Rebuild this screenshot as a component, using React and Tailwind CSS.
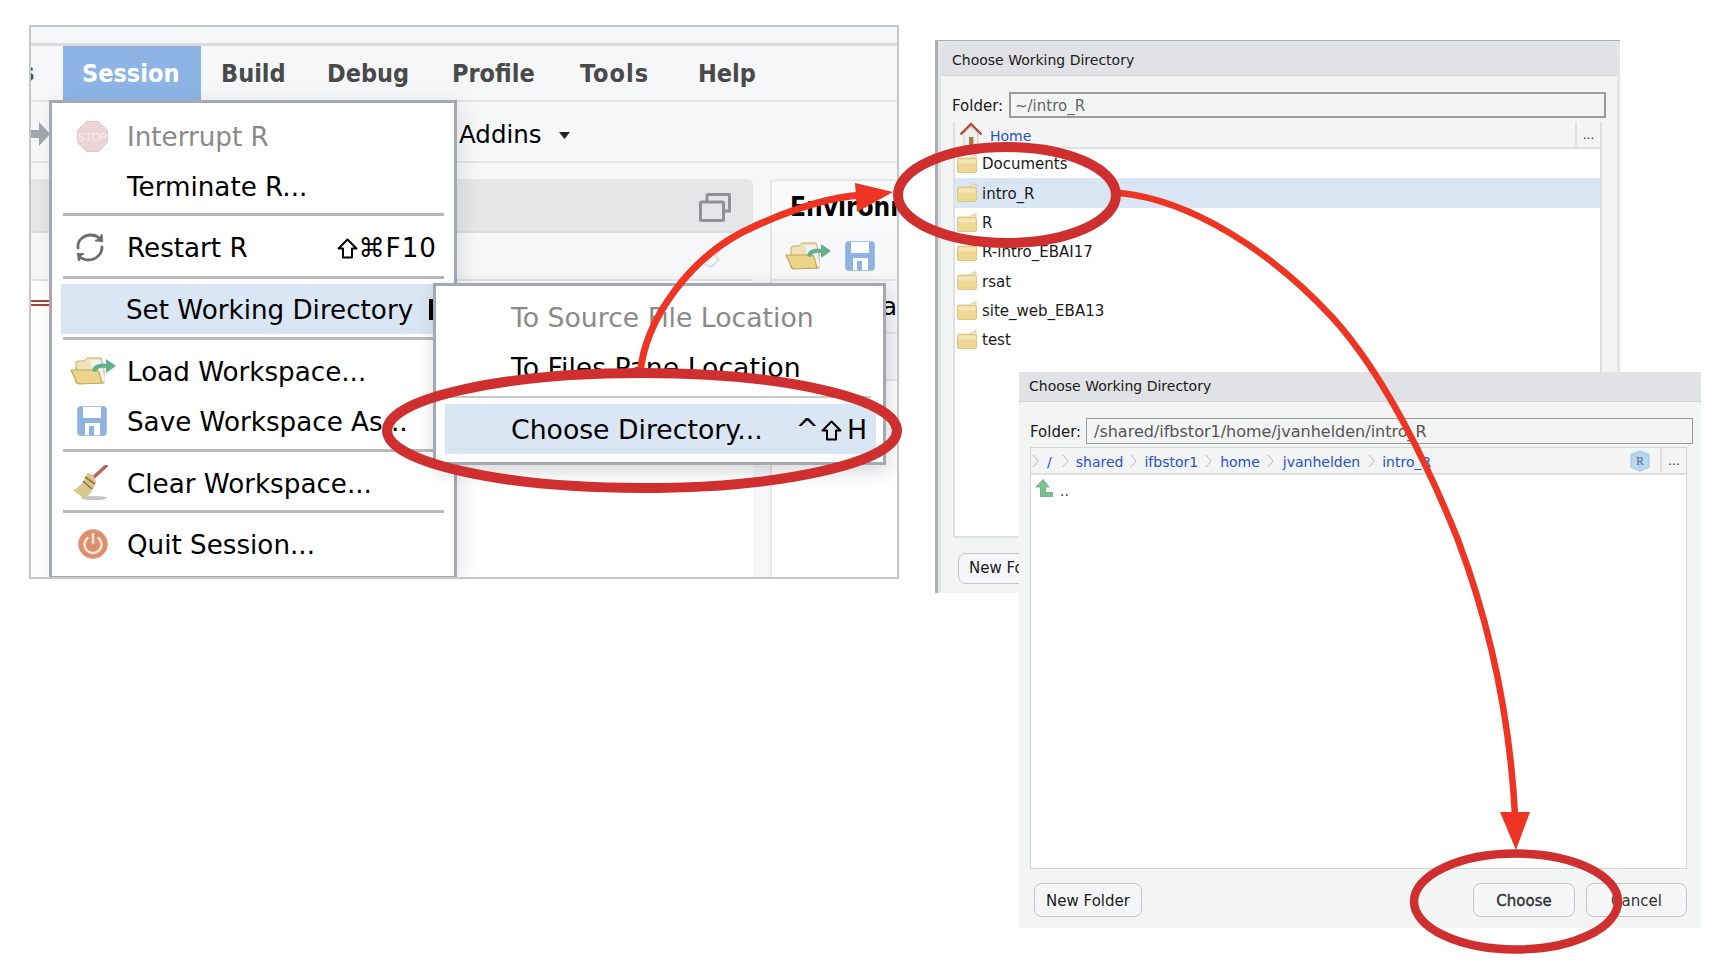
import React from "react";

const Stop = () => (
  <svg width="31" height="31" viewBox="0 0 31 31">
    <polygon points="9.5,0.5 21.5,0.5 30.5,9.5 30.5,21.5 21.5,30.5 9.5,30.5 0.5,21.5 0.5,9.5" fill="#ecd3d5" stroke="#e6c8ca" />
    <text x="15.5" y="20" textAnchor="middle" fontSize="11" fill="#f6eced" fontFamily="Liberation Sans, sans-serif">STOP</text>
  </svg>
);
const Refresh = () => (
  <svg width="29" height="31" viewBox="0 0 29 31" fill="none" stroke="#6e6e6e" strokeWidth="2.8" strokeLinecap="round">
    <path d="M3 16 C2 8 9 3 16 3 C20 3 22 4 24 6" />
    <path d="M27 15 C27 23 20 28 13 28 C10 28 8 27 6 26" />
    <path d="M21 8.5 L27 9 L26.5 3" strokeWidth="2.2" fill="#6e6e6e" />
    <path d="M8 22 L3 22 L4 28" strokeWidth="2.2" fill="#6e6e6e" />
  </svg>
);
const FolderOpen = () => (
  <svg width="46" height="28" viewBox="0 0 46 28">
    <path d="M6 11 L6 6 Q6 4 8 4 L14 4 L17 1 L31 1 L34 12 L34 26 L6 26 Z" fill="#efe2b8" stroke="#c6ae6a" strokeWidth="1" />
    <path d="M20 3 L31 3 L35 24 L24 24 Z" fill="#f1f2f2" />
    <path d="M1 13 L27 13 Q28 13 29 15 L32 26 L9 27 Q8 27 7 26 Z" fill="#ecd488" stroke="#c2a85f" strokeWidth="1.2" />
    <path d="M22 14 C23 8 28 6 36 7 L36 2 L46 9 L36 16 L36 11 C31 10 27 11 26 15 Z" fill="#62b08c" />
  </svg>
);
const Floppy = ({ s = 30 }) => (
  <svg width={s} height={s} viewBox="0 0 30 30">
    <rect x="0.5" y="0.5" width="29" height="29" rx="3" fill="#8fb3e0" stroke="#a9c3e6" />
    <rect x="6" y="1" width="18" height="11" fill="#fff" />
    <path d="M8 29 L8 17 L23 17 L23 29 Z" fill="#fff" />
    <rect x="12" y="20" width="5" height="9" fill="#8fb3e0" />
  </svg>
);
const Broom = () => (
  <svg width="36" height="36" viewBox="0 0 36 36">
    <ellipse cx="22" cy="33" rx="13" ry="2" fill="#c4c4c4" />
    <path d="M22 12 L34 1" stroke="#b0685a" strokeWidth="3.5" strokeLinecap="round" />
    <path d="M15 8 C20 8 24 13 24 17 C22 24 16 32 13 34 C8 31 4 27 1 25 C7 23 12 17 15 8 Z" fill="#d9c78f" />
    <path d="M13 12 L23 19 M11 16 L20 24" stroke="#8d7441" strokeWidth="1.6" />
  </svg>
);
const Power = () => (
  <svg width="30" height="30" viewBox="0 0 30 30" fill="none">
    <circle cx="15" cy="15" r="14.5" fill="#dc8f6b" stroke="#e2a88e" />
    <path d="M9.5 9 A8.5 8.5 0 1 0 20.5 9" stroke="#f6e2d6" strokeWidth="2.6" strokeLinecap="round" />
    <path d="M15 5 L15 14" stroke="#f6e2d6" strokeWidth="2.6" strokeLinecap="round" />
  </svg>
);
const Restore = () => (
  <svg width="32" height="29" viewBox="0 0 32 29" fill="none" stroke="#8f9195" strokeWidth="3">
    <path d="M8 9 L8 2 Q8 1.5 9 1.5 L30 1.5 Q30.5 1.5 30.5 2 L30.5 18 L24 18" />
    <rect x="1.5" y="9" width="23" height="18.5" rx="1" />
  </svg>
);
const Folder = () => (
  <svg width="20" height="19" viewBox="0 0 20 19" className="shrink-0">
    <path d="M1 4 L12 4 L19 0.5 L19 5 L1 6 Z" fill="#f0e6c4" stroke="#d6c68c" strokeWidth="0.8" />
    <rect x="0.5" y="4.5" width="19" height="14" rx="1.5" fill="#eed693" stroke="#dcc685" />
    <rect x="1.5" y="5.5" width="17" height="4" fill="#f5e6b6" />
  </svg>
);
const Home = () => (
  <svg width="24" height="26" viewBox="0 0 24 26">
    <path d="M5 11 L5 24 L19 24 L19 11 L12 5 Z" fill="#efefec" stroke="#c9c9c4" />
    <rect x="10" y="15" width="4.5" height="9" fill="#a87a4a" />
    <path d="M1.5 12.5 L12 2 L22.5 12.5" fill="none" stroke="#b04a3e" strokeWidth="2.4" />
  </svg>
);
const RCube = () => (
  <svg width="20" height="22" viewBox="0 0 20 22">
    <path d="M10 1 L19 4.5 L19 17.5 L10 21 L1 17.5 L1 4.5 Z" fill="#bcd8ee" stroke="#a3c5e2" />
    <path d="M1 4.5 L10 8 L19 4.5 M10 8 L10 21" fill="none" stroke="#a3c5e2" strokeWidth="0.8" />
    <text x="10" y="15" textAnchor="middle" fontSize="12" fill="#4e6e96" fontFamily="Liberation Serif, serif">R</text>
  </svg>
);
const UpArrow = () => (
  <svg width="18" height="18" viewBox="0 0 18 18">
    <path d="M1 8 L8 0.5 L14 8 L10.5 8 L10.5 13.5 L17.5 13.5 L17.5 17.5 L5.5 17.5 L5.5 8 Z" fill="#7bc08f" stroke="#5fa878" strokeWidth="0.8" />
  </svg>
);
const Chevron = ({ cls }) => (
  <svg width="7" height="14" viewBox="0 0 7 14" fill="none" stroke="#b9bcc0" className={cls}>
    <path d="M1 1 L6 7 L1 13" />
  </svg>
);
const ShiftKey = () => (
  <svg width="21" height="21" viewBox="0 0 21 21" fill="none" stroke="#000" strokeWidth="2" aria-label="shift" className="shrink-0">
    <path d="M10.5 1.5 L19.5 10.5 L15 10.5 L15 19.5 L6 19.5 L6 10.5 L1.5 10.5 Z" strokeLinejoin="round" />
  </svg>
);

const Sep = ({ cls }) => <div className={"h-[3px] ml-[11px] mr-[10px] bg-[#b9b9b9] " + cls} />;

const Row = ({ icon, label, shortcut, cls = "" }) => (
  <div className={"flex items-center h-[50px] " + cls}>
    <div className="w-[75px] pl-[25px] flex items-center">{icon}</div>
    <span className="flex-1 whitespace-nowrap pt-[3px]">{label}</span>
    {shortcut && <span className="pr-[17px] pt-[3px] whitespace-nowrap flex items-center">{shortcut}</span>}
  </div>
);

const MenuItem = ({ label, w, cls = "" }) => (
  <div className={"h-full flex items-center " + w + " " + cls}>{label}</div>
);

const SessionMenu = () => (
  <div className="absolute left-[18px] top-[73px] w-[408px] h-[479px] bg-white border-[3px] border-[#a4a8b3] pt-[8px] text-[26.2px] text-black shadow-[4px_4px_20px_rgba(0,0,0,0.1)]">
    <Row icon={<Stop />} label="Interrupt R" cls="text-[#8a8a8a]" />
    <Row label="Terminate R..." />
    <Sep cls="mt-[2px] mb-[6px]" />
    <Row icon={<span className="-ml-[2px]"><Refresh /></span>} label="Restart R" shortcut={<><ShiftKey /><span className="tracking-[1px]">⌘F10</span></>} />
    <Sep cls="mt-[4px] mb-[5px]" />
    <div className="flex items-center h-[50px] bg-[#dbe6f5] ml-[9px] overflow-hidden">
      <span className="pl-[65px] pt-[3px] whitespace-nowrap">Set Working Directory</span>
      <span className="ml-[16px] w-[8px] h-[21px] bg-black shrink-0" />
    </div>
    <Sep cls="mt-[3px] mb-[6px]" />
    <Row icon={<span className="-ml-[7px]"><FolderOpen /></span>} label="Load Workspace..." />
    <Row icon={<Floppy />} label="Save Workspace As..." />
    <Sep cls="mt-[3px] mb-[6px]" />
    <Row icon={<span className="-ml-[5px]"><Broom /></span>} label="Clear Workspace..." />
    <Sep cls="mt-[2px] mb-[6px]" />
    <Row icon={<span className="ml-[1px]"><Power /></span>} label="Quit Session..." />
  </div>
);

const SubMenu = () => (
  <div className="absolute left-[402px] top-[256px] w-[453px] h-[182px] bg-white border-[3px] border-[#a4a8b3] pt-[7px] text-[26.7px] text-black shadow-[2px_6px_18px_rgba(0,0,0,0.16)]">
    <div className="h-[50px] flex items-center pl-[75px] pt-[1px] text-[#8a8a8a] whitespace-nowrap">To Source File Location</div>
    <div className="h-[50px] flex items-center pl-[75px] pt-[1px] whitespace-nowrap">To Files Pane Location</div>
    <div className="h-[2px] mt-[3px] mb-[6px] ml-[9px] mr-[12px] bg-[#c8c8c8]" />
    <div className="h-[50px] ml-[9px] mr-[7px] bg-[#dbe6f5] flex items-center justify-between pl-[66px] pr-[9px] pt-[2px]">
      <span className="whitespace-nowrap">Choose Directory...</span>
      <span className="whitespace-nowrap flex items-center gap-[5px]"><span className="text-[28px] -mr-[3px]">^</span><ShiftKey /><span>H</span></span>
    </div>
  </div>
);

const RStudio = () => (
  <div className="absolute left-[29px] top-[25px] w-[870px] h-[554px] border-2 border-[#c6c7ca] bg-[#f6f7f9] flex flex-col overflow-hidden">
    <div className="h-[16px] shrink-0" />
    <div className="h-[3px] shrink-0 bg-[#dadbdd]" />
    <div className="h-[54px] shrink-0 flex items-center text-[25px] font-bold text-[#4a4a4a] font-['DejaVu_Sans_Condensed','DejaVu_Sans',sans-serif]">
      <div className="w-[32px] overflow-hidden"><span className="-ml-[10px] block">s</span></div>
      <MenuItem label="Session" w="w-[138px]" cls="bg-[#8eb4e6] text-white pl-[19px] pt-[2px]" />
      <MenuItem label="Build" w="w-[126px]" cls="pl-[20px] pt-[2px]" />
      <MenuItem label="Debug" w="w-[125px]" cls="pt-[2px]" />
      <MenuItem label="Profile" w="w-[128px]" cls="pt-[2px]" />
      <MenuItem label="Tools" w="w-[118px]" cls="pt-[2px] tracking-[1px]" />
      <MenuItem label="Help" w="w-[100px]" cls="pt-[2px]" />
    </div>
    <div className="h-[2px] shrink-0 bg-[#e3e4e6]" />
    <div className="h-[59px] shrink-0 flex items-center pt-[4px] text-[24.5px] text-black">
      <svg width="19" height="26" viewBox="0 0 19 26" className="shrink-0"><path d="M0 9 L8 9 L8 1 L19 13 L8 25 L8 17 L0 17 Z" fill="#a2a6b0" /></svg>
      <span className="ml-[409px] pt-[3px] whitespace-nowrap">Addins</span>
      <svg width="11" height="7" viewBox="0 0 11 7" className="ml-[17px] mt-[4px]"><path d="M0 0 L11 0 L5.5 7 Z" fill="#222" /></svg>
    </div>
    <div className="h-[2px] shrink-0 bg-[#e3e4e6]" />
    <div className="flex-1 flex mt-[16px] min-h-0">
      <div className="w-[722px] flex flex-col">
        <div className="h-[54px] shrink-0 bg-[#e5e6e8] rounded-tr-[6px] border-b-2 border-[#dcdddf] flex items-center justify-end pr-[22px] pt-[5px]">
          <Restore />
        </div>
        <div className="h-[48px] shrink-0 bg-[#f6f7f9] border-b-2 border-[#e3e4e6] flex items-center justify-end pr-[24px]">
          <svg width="28" height="24" viewBox="0 0 28 24" fill="none" stroke="#dedfe1" strokeWidth="2"><path d="M24 1 L14 12 M3 20 L12 10 L18 16 L10 23 Z" /></svg>
        </div>
        <div className="flex-1 bg-white" />
      </div>
      <div className="w-[17px] shrink-0" />
      <div className="flex-1 flex flex-col overflow-hidden border-l-2 border-[#e5e6e8]">
        <div className="h-[54px] shrink-0 rounded-tl-[6px] border-t-2 border-[#e5e6e8] bg-[#f9fafb] flex items-center pl-[18px] text-[26px] font-bold text-black whitespace-nowrap font-['DejaVu_Sans_Condensed','DejaVu_Sans',sans-serif]">Environment</div>
        <div className="h-[48px] shrink-0 border-b-2 border-[#e3e4e6] flex items-center pl-[13px] gap-[14px]">
          <FolderOpen />
          <Floppy />
        </div>
        <div className="h-[53px] shrink-0 border-b-2 border-[#e3e4e6] flex items-center justify-end text-[25px] text-black overflow-hidden">oa</div>
        <div className="h-[47px] shrink-0 border-b-2 border-[#e3e4e6]" />
        <div className="flex-1 bg-white" />
      </div>
    </div>
    <div className="absolute left-0 top-[273px] w-[18px] flex flex-col gap-[2px]">
      <div className="h-[2px] bg-[#b04038]" />
      <div className="h-[2px] bg-[#b04038]" />
    </div>
    <SessionMenu />
    <SubMenu />
  </div>
);

const FolderRow = ({ name, active }) => (
  <div className={"h-[29.33px] flex items-center pl-[2px] gap-[5px] text-[15px] " + (active ? "bg-[#dbe6f5]" : "")}>
    <Folder />
    <span className="pt-[2px]">{name}</span>
  </div>
);

const DialogBack = () => (
  <div className="absolute left-[935px] top-[40px] w-[685px] h-[553px] bg-[#e4e5e7] border-l-[3px] border-t border-[#aeafb2] pl-[3px] pt-[3px] pr-[3px] text-[14px] text-[#1a1a1a]">
    <div className="h-full bg-[#f3f4f4] rounded-t-[6px] flex flex-col overflow-hidden">
      <div className="h-[32px] shrink-0 bg-[#e1e2e6] border-b border-[#d5d6d8] flex items-center pl-[11px] pt-[2px]">Choose Working Directory</div>
      <div className="flex items-center h-[26px] mt-[16px] ml-[11px] mr-[11px] gap-[2px] text-[15px]">
        <span className="w-[55px] pt-[2px]">Folder:</span>
        <div className="flex-1 h-full border-2 border-[#9a9b9b] flex items-center pl-[4px] pt-[2px] text-[#666]">~/intro_R</div>
      </div>
      <div className="mt-[4px] ml-[12px] mr-[15px] h-[416px] border-2 border-[#dfe1e1] border-t-0 bg-white flex flex-col">
        <div className="h-[27px] shrink-0 bg-[#f3f5f5] border-b-2 border-[#dfe1e1] flex items-center">
          <div className="flex-1 flex items-center pl-[4px] gap-[7px] text-[#2a4fcf]"><Home /><span className="pt-[3px]">Home</span></div>
          <div className="w-[25px] h-full border-l-2 border-[#dfe1e1] flex items-center justify-center text-[#333] text-[12px]">...</div>
        </div>
        <FolderRow name="Documents" />
        <FolderRow name="intro_R" active />
        <FolderRow name="R" />
        <FolderRow name="R-intro_EBAI17" />
        <FolderRow name="rsat" />
        <FolderRow name="site_web_EBA13" />
        <FolderRow name="test" />
      </div>
      <div className="mt-[15px] ml-[17px]">
        <div className="h-[31px] w-[110px] border border-[#c3c5c7] rounded-[8px] bg-[#f5f6f8] flex items-center pl-[10px] text-[15px]">New Folder</div>
      </div>
    </div>
  </div>
);

const Crumb = ({ label, cls }) => <span className={"text-[#2a4fcf] " + cls}>{label}</span>;

const Btn = ({ label, cls }) => (
  <div className={"h-[34px] border border-[#c3c5c7] rounded-[8px] bg-[#f5f6f8] flex items-center justify-center pt-[3px] text-[15px] " + cls}>{label}</div>
);

const DialogFront = () => (
  <div className="absolute left-[1019px] top-[372px] w-[682px] h-[556px] bg-[#f3f4f4] flex flex-col text-[14px] text-[#1a1a1a]">
    <div className="h-[30px] shrink-0 bg-[#e1e2e6] border-b border-[#d5d6d8] flex items-center pl-[10px]">Choose Working Directory</div>
    <div className="flex items-center h-[26px] mt-[16px] ml-[11px] mr-[8px] text-[15px]">
      <span className="w-[56px] pt-[2px]">Folder:</span>
      <div className="flex-1 h-full border border-[#9a9b9b] flex items-center pl-[7px] pt-[2px] text-[#555] text-[16px]">/shared/ifbstor1/home/jvanhelden/intro_R</div>
    </div>
    <div className="mt-[3px] ml-[11px] mr-[14px] flex-1 flex flex-col border border-[#d4d6d6] bg-white">
      <div className="h-[27px] shrink-0 bg-[#f3f5f5] border-b-2 border-[#dfe1e1] flex items-center">
        <div className="flex-1 flex items-center whitespace-nowrap">
          <Chevron cls="ml-[1px]" />
          <Crumb label="/" cls="ml-[8px] pt-[3px]" />
          <Chevron cls="ml-[10px]" />
          <Crumb label="shared" cls="ml-[7px] pt-[3px]" />
          <Chevron cls="ml-[7px]" />
          <Crumb label="ifbstor1" cls="ml-[7px] pt-[3px]" />
          <Chevron cls="ml-[7px]" />
          <Crumb label="home" cls="ml-[8px] pt-[3px]" />
          <Chevron cls="ml-[7px]" />
          <Crumb label="jvanhelden" cls="ml-[9px] pt-[3px]" />
          <Chevron cls="ml-[8px]" />
          <Crumb label="intro_R" cls="ml-[7px] pt-[3px]" />
          <div className="ml-auto mr-[10px]"><RCube /></div>
        </div>
        <div className="w-[26px] h-full border-l-2 border-[#dfe1e1] flex items-center justify-center text-[#333] text-[12px]">...</div>
      </div>
      <div className="flex items-start pl-[4px] pt-[4px] gap-[7px]">
        <UpArrow />
        <span className="leading-[24px] text-[#333]">..</span>
      </div>
    </div>
    <div className="h-[59px] shrink-0 flex items-start pt-[14px] pl-[15px] pr-[14px]">
      <Btn label="New Folder" cls="w-[108px]" />
      <Btn label="Choose" cls="w-[102px] ml-auto text-[#333] [-webkit-text-stroke:0.4px_#333]" />
      <Btn label="Cancel" cls="w-[101px] ml-[11px] text-[#333]" />
    </div>
  </div>
);

const Annotations = () => (
  <svg width="1718" height="962" viewBox="0 0 1718 962" className="absolute left-0 top-0 pointer-events-none" fill="none">
    <path d="M640 374 C645 320 690 255 753 227 C790 210 830 197 862 195" stroke="#ee3524" strokeWidth="7" />
    <polygon points="855,183 893,192 857,212" fill="#ee3524" />
    <path d="M1120 193 C1190 200 1270 250 1332 317 C1385 375 1430 470 1458 540 C1490 625 1510 720 1515 815" stroke="#ee3524" strokeWidth="6.5" />
    <polygon points="1500,812 1530,812 1516,850" fill="#ee3524" />
    <ellipse cx="642" cy="430.5" rx="255" ry="57.5" stroke="#cf2f2f" strokeWidth="10" />
    <ellipse cx="1007" cy="195" rx="109" ry="48" stroke="#cf2f2f" strokeWidth="10" />
    <ellipse cx="1516" cy="901.5" rx="102" ry="48" stroke="#cf2f2f" strokeWidth="8.5" />
  </svg>
);

export default function App() {
  return (
    <div className="relative w-[1718px] h-[962px] bg-white overflow-hidden font-['DejaVu_Sans',sans-serif]">
      <RStudio />
      <DialogBack />
      <DialogFront />
      <Annotations />
    </div>
  );
}
